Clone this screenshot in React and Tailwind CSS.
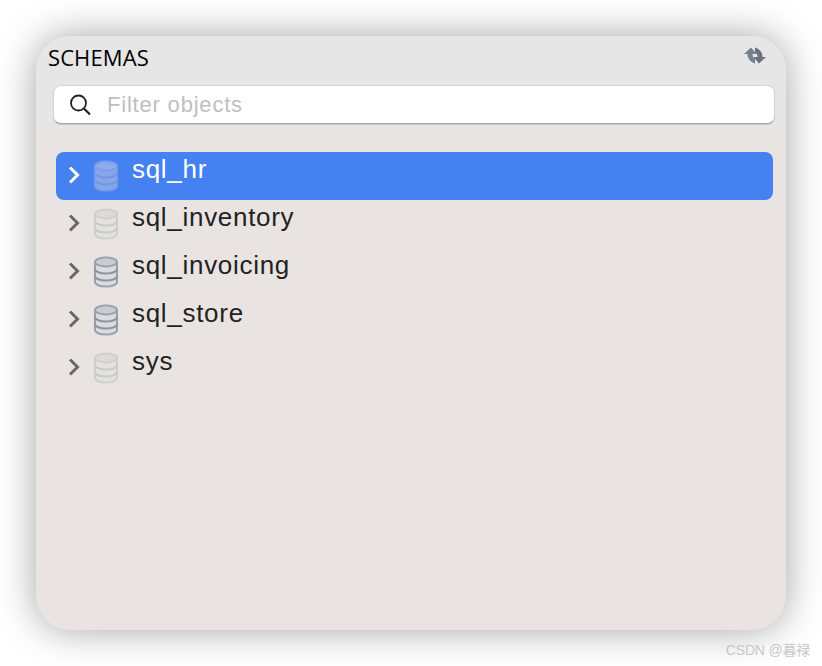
const schemas = [
  { name: "sql_hr", kind: "selected" },
  { name: "sql_inventory", kind: "faded" },
  { name: "sql_invoicing", kind: "normal" },
  { name: "sql_store", kind: "normal" },
  { name: "sys", kind: "faded" },
];

const dbColors = {
  selected: { fill: "#86a6ea", top: "#8dabeb", line: "#7097e6", edge: "#7a9ee8" },
  faded: { fill: "#e4e2e1", top: "#dddbda", line: "#c9c8c8", edge: "#d0cfcf" },
  normal: { fill: "#d9dde2", top: "#c8cdd4", line: "#8b94a0", edge: "#98a1ac" },
};

const DbIcon = ({ kind }) => {
  const c = dbColors[kind];
  return (
    <svg width="26" height="32" viewBox="0 0 26 32" className="shrink-0 blur-[0.6px]">
      <path d="M2 6v20c0 2.600 4.900 4.500 11 4.500s11-1.900 11-4.500V6z" fill={c.fill} stroke={c.edge} strokeWidth="2" />
      <ellipse cx="13" cy="6" rx="11" ry="4.500" fill={c.top} stroke={c.edge} strokeWidth="2" />
      <path d="M2 13c0 2.600 4.900 4.500 11 4.500s11-1.900 11-4.500" fill="none" stroke={c.line} strokeWidth="2" />
      <path d="M2 20c0 2.600 4.900 4.500 11 4.500s11-1.900 11-4.500" fill="none" stroke={c.line} strokeWidth="2" />
    </svg>
  );
};

const Chevron = ({ selected }) => (
  <svg width="12" height="18" viewBox="0 0 12 18" className="shrink-0">
    <path
      d="M2 1.500l7.500 7.500-7.500 7.500"
      fill="none"
      stroke={selected ? "#ffffff" : "#6b6866"}
      strokeWidth="3"
    />
  </svg>
);

const RefreshIcon = () => (
  <svg width="22" height="18" viewBox="0 0 22 18" className="blur-[0.4px]">
    <path d="M7 .5L0 7h3.500c0 4 2 7.500 7.500 9.500v-5C9 10.500 8.500 9 8.500 7h4z" fill="#77818e" />
    <path d="M15 16.500L22 10h-3.500c0-4-2-7.500-7.500-9.500v5c2 1 2.500 2.500 2.500 4.500h-4z" fill="#687380" />
  </svg>
);

const SearchIcon = () => (
  <svg width="24" height="24" viewBox="0 0 24 24" fill="none" stroke="#222222" className="shrink-0">
    <circle cx="10.500" cy="10" r="7.500" strokeWidth="1.800" />
    <path d="M16 15.500l6 6" strokeWidth="2.200" />
  </svg>
);

export default function App() {
  return (
    <div className="relative w-[822px] h-[666px] bg-white pt-[36px] pl-[36px] overflow-hidden font-['Liberation_Sans',sans-serif]">
      {/* Panel */}
      <div className="w-[750px] h-[594px] rounded-[34px] bg-[#e9e4e1] overflow-hidden shadow-[0_0_38px_rgba(0,0,0,0.36)] flex flex-col">
        {/* Header */}
        <div className="h-[96px] bg-[#e6e6e6] flex flex-col shrink-0">
          <div className="h-[49px] pl-[12px] pr-[20px] flex items-center justify-between">
            <span className="text-[22px] text-black font-['Open_Sans',sans-serif] tracking-[0.1px] relative top-[-3px]">SCHEMAS</span>
            <span className="relative top-[-5px]">
              <RefreshIcon />
            </span>
          </div>
          <div className="ml-[17px] w-[722px] h-[39px] bg-white rounded-[8px] border border-[#d4d4d4] border-b-[#a8a8a8] shadow-[0_1px_1px_rgba(0,0,0,0.15)] flex items-center pl-[14px] gap-[15px]">
            <SearchIcon />
            <span className="text-[22px] text-[#bfbfbf] tracking-[0.8px]">Filter objects</span>
          </div>
        </div>

        {/* Schema list */}
        <div className="pt-[20px] pl-[20px] pr-[13px] flex flex-col">
          {schemas.map((s) => {
            const selected = s.kind === "selected";
            return (
              <div
                key={s.name}
                className={
                  selected
                    ? "h-[48px] rounded-[8px] bg-[#4581f0] flex items-center pl-[12px] text-white"
                    : "h-[48px] rounded-[8px] flex items-center pl-[12px] text-[#222222]"
                }
              >
                <span className="mb-[2px]">
                  <Chevron selected={selected} />
                </span>
                <span className="ml-[13px]">
                  <DbIcon kind={s.kind} />
                </span>
                <span className="ml-[13px] mb-[14px] text-[26px] tracking-[0.7px] leading-[36px]">{s.name}</span>
              </div>
            );
          })}
        </div>
      </div>

      {/* Watermark */}
      <div className="absolute right-[12px] top-[641px] text-[14px] leading-[18px] tracking-[-0.2px] text-[#c8c8c8] font-['Liberation_Sans','Noto_Sans_CJK_SC',sans-serif]">
        CSDN @暮禄
      </div>
    </div>
  );
}
